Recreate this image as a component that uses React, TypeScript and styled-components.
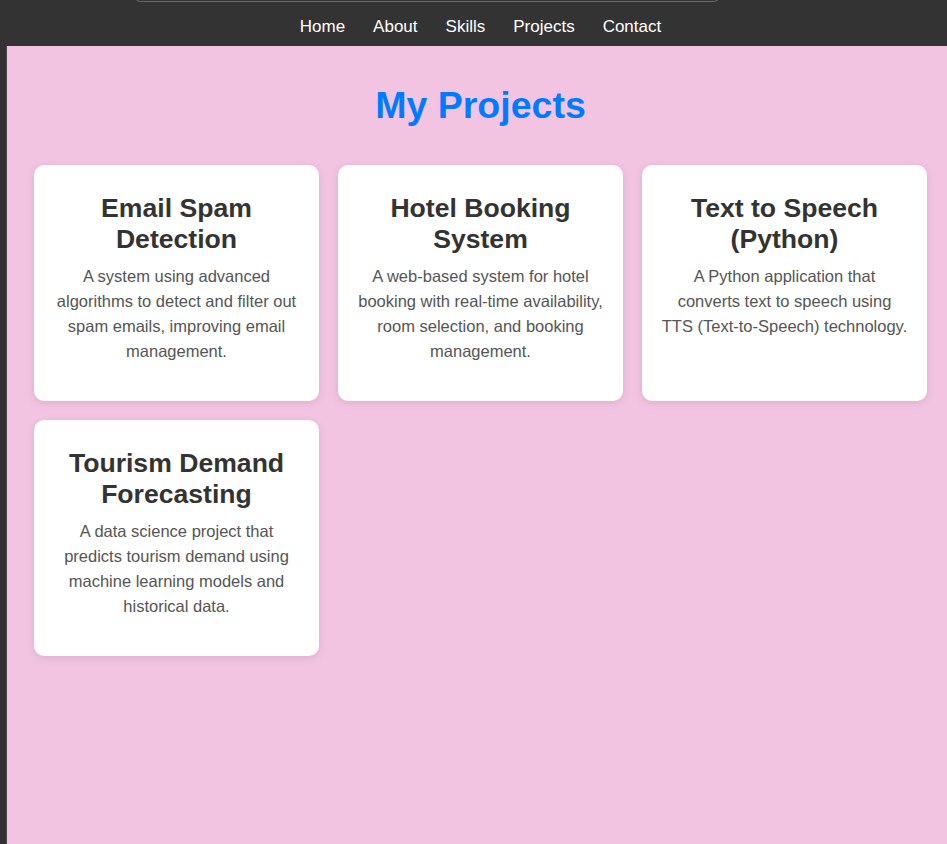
import styled, { createGlobalStyle } from 'styled-components'

const GlobalStyle = createGlobalStyle`
  html, body {
    margin: 0;
    padding: 0;
    background: #323232;
    overflow: hidden;
  }
  body {
    font-family: 'Liberation Sans', Arial, sans-serif;
  }
`

const Page = styled.div`
  display: flex;
  flex-direction: column;
  min-height: 844px;
`

const Header = styled.header`
  position: relative;
  background: #333333;
  height: 46px;
  display: flex;
  align-items: flex-end;
  justify-content: center;
  padding-left: 14px;
  box-sizing: border-box;
`

// bottom edge of the browser's address field, peeking in at the top
const ChromeEdge = styled.div`
  position: absolute;
  top: -6px;
  left: 133px;
  width: 586px;
  height: 7px;
  border: 1px solid #6a6a6a;
  border-top: none;
  border-radius: 0 0 10px 10px;
`

const Nav = styled.nav`
  display: flex;
  gap: 28px;
  height: 39px;
  align-items: center;
`

const NavLink = styled.a`
  color: #ffffff;
  font-size: 17px;
  text-decoration: none;
  cursor: pointer;
`

const Main = styled.main`
  flex: 1;
  margin-left: 6px;
  border-left: 1px solid #4a4a4a;
  background: #f2c4e2;
  padding: 0 20px 40px 27px;
`

const Title = styled.h2`
  margin: 38px 0 38px;
  text-align: center;
  color: #007bff;
  font-size: 37.5px;
  font-weight: 700;
`

const Grid = styled.div`
  display: grid;
  grid-template-columns: repeat(3, 285px);
  gap: 19px;
`

const Card = styled.div`
  background: #ffffff;
  border-radius: 10px;
  box-shadow: 0 2px 8px rgba(0, 0, 0, 0.1);
  padding: 28px 19px 28px;
  text-align: center;
`

const CardTitle = styled.h3`
  margin: 0 0 9px;
  color: #333333;
  font-size: 26.6px;
  font-weight: 700;
`

const CardText = styled.p`
  margin: 0 0 9px;
  color: #555555;
  font-size: 16.5px;
  line-height: 25px;
`

const links = ['Home', 'About', 'Skills', 'Projects', 'Contact']

const projects = [
  {
    title: 'Email Spam Detection',
    text: 'A system using advanced algorithms to detect and filter out spam emails, improving email management.',
  },
  {
    title: 'Hotel Booking System',
    text: 'A web-based system for hotel booking with real-time availability, room selection, and booking management.',
  },
  {
    title: 'Text to Speech (Python)',
    text: 'A Python application that converts text to speech using TTS (Text-to-Speech) technology.',
  },
  {
    title: 'Tourism Demand Forecasting',
    text: 'A data science project that predicts tourism demand using machine learning models and historical data.',
  },
]

export default function App() {
  return (
    <Page>
      <GlobalStyle />
      <Header>
        <ChromeEdge />
        <Nav>
          {links.map((l) => (
            <NavLink key={l}>{l}</NavLink>
          ))}
        </Nav>
      </Header>
      <Main>
        <Title>My Projects</Title>
        <Grid>
          {projects.map((p) => (
            <Card key={p.title}>
              <CardTitle>{p.title}</CardTitle>
              <CardText>{p.text}</CardText>
            </Card>
          ))}
        </Grid>
      </Main>
    </Page>
  )
}
